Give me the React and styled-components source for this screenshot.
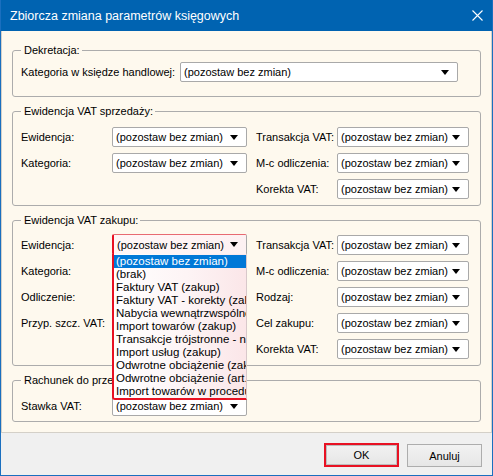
import React from 'react'
import styled, { createGlobalStyle } from 'styled-components'

const GlobalStyle = createGlobalStyle`
  html, body { margin: 0; padding: 0; }
  body { background: #ffffff; }
  * { box-sizing: border-box; }
`

const FONT = `"Liberation Sans", Arial, sans-serif`

const Window = styled.div`
  width: 493px;
  height: 476px;
  display: flex;
  flex-direction: column;
  border: 1px solid #1a6fbf;
  border-top: none;
  font-family: ${FONT};
  font-size: 11px;
  color: #000;
`

const TitleBar = styled.div`
  height: 31px;
  flex: none;
  display: flex;
  align-items: center;
  justify-content: space-between;
  padding: 0 9px 0 9px;
  background: #0063b1;
  color: #fff;
  font-size: 12.5px;
`

const Client = styled.div`
  flex: 1;
  display: flex;
  flex-direction: column;
  gap: 7px;
  padding: 12px 10px 6px 10px;
  background: #fef9ee;
  border: 1px solid #d4d0c8;
  border-top: none;
`

const Group = styled.fieldset`
  margin: 0;
  min-width: 0;
  border: 1px solid #acacac;
  border-radius: 3px;
  padding: ${p => p.$pt || 8}px 10px ${p => p.$pb || 6}px 8px;
`

const Legend = styled.legend`
  padding: 0 2px 0 3px;
  line-height: 14px;
  font-size: 11px;
`

const Columns = styled.div`
  display: flex;
  gap: 9px;
`

const Pane = styled.div`
  display: grid;
  grid-template-columns: ${p => p.$label}px ${p => p.$field}px;
  grid-auto-rows: 20px;
  row-gap: 6px;
  align-items: center;
`

const Label = styled.span`
  white-space: nowrap;
  font-size: 11px;
`

const SelectBox = styled.div`
  position: relative;
  height: ${p => (p.$focus ? 21 : 20)}px;
  margin-top: ${p => (p.$focus ? -1 : 0)}px;
  display: flex;
  align-items: center;
  justify-content: space-between;
  padding: 0 8px 0 3px;
  background: ${p => (p.$focus ? 'linear-gradient(to right, #fff7f7, #fdf1f2)' : '#fff')};
  border: 1px solid #a9a9a9;
  border-left: ${p => (p.$focus ? '2px solid #e81123' : '1px solid #a9a9a9')};
  border-top-color: ${p => (p.$focus ? '#e86a72' : '#a9a9a9')};
  border-radius: 2px;
  font-size: 11px;
  white-space: nowrap;
`

const Value = styled.span`
  visibility: ${p => (p.$covered ? 'hidden' : 'visible')};
`

const Arrow = styled.span`
  width: 0;
  height: 0;
  border-left: 4.5px solid transparent;
  border-right: 4.5px solid transparent;
  border-top: 5px solid #000;
`

const List = styled.div`
  position: absolute;
  top: 100%;
  left: -2px;
  width: 135px;
  height: 146px;
  z-index: 10;
  overflow: hidden;
  padding-top: 1px;
  background: linear-gradient(to right, #ffffff 0%, #fdf4f5 55%, #fbe6e8 100%);
  border-left: 2px solid #e81123;
  border-bottom: 2px solid #e81123;
  border-right: 1px solid #d8c8ca;
  border-bottom-left-radius: 3px;
  font-size: 11.5px;
`

const Notch = styled.span`
  position: absolute;
  left: -5px;
  top: 60px;
  width: 0;
  height: 0;
  border-top: 3px solid transparent;
  border-bottom: 3px solid transparent;
  border-right: 3px solid #e81123;
`

const Item = styled.div`
  height: 13px;
  line-height: 13px;
  padding-left: 2px;
  white-space: nowrap;
  overflow: hidden;
  background: ${p => (p.$active ? '#0078d7' : 'transparent')};
  color: ${p => (p.$active ? '#fff' : '#000')};
`

const Footer = styled.div`
  height: 42px;
  flex: none;
  display: flex;
  justify-content: flex-end;
  align-items: flex-start;
  gap: 8px;
  padding: 10px 10px 0 0;
  background: #f0f0f0;
`

const Button = styled.button`
  width: 75px;
  height: ${p => (p.$primary ? 24 : 23)}px;
  margin-top: ${p => (p.$primary ? 0 : 1)}px;
  font-family: ${FONT};
  font-size: 11px;
  color: #000;
  background: linear-gradient(#f2f2f2, #e6e6e6);
  border: ${p => (p.$primary ? '2px solid #e81123' : '1px solid #adadad')};
  box-shadow: ${p => (p.$primary ? 'inset 0 0 0 1px #bdbdbd' : 'none')};
  border-radius: 0;
  padding: 0;
`

const KEEP = '(pozostaw bez zmian)'

const options = [
  '(pozostaw bez zmian)',
  '(brak)',
  'Faktury VAT (zakup)',
  'Faktury VAT - korekty (zakup)',
  'Nabycia wewnątrzwspólnotowe',
  'Import towarów (zakup)',
  'Transakcje trójstronne - nabycie',
  'Import usług (zakup)',
  'Odwrotne obciążenie (zakup)',
  'Odwrotne obciążenie (art. 17)',
  'Import towarów w procedurze',
]

function Select({ focus, open, covered }) {
  return (
    <SelectBox $focus={focus}>
      <Value $covered={covered}>{KEEP}</Value>
      <Arrow />
      {open && (
        <List>
          <Notch />
          {options.map((o, i) => (
            <Item key={o} $active={i === 0}>{o}</Item>
          ))}
        </List>
      )}
    </SelectBox>
  )
}

function Fields({ label, field, rows }) {
  return (
    <Pane $label={label} $field={field}>
      {rows.map((r) => (
        <React.Fragment key={r.name}>
          <Label>{r.name}</Label>
          <Select focus={r.open} open={r.open} covered={r.covered} />
        </React.Fragment>
      ))}
    </Pane>
  )
}

function CloseIcon() {
  return (
    <svg width="11" height="11" viewBox="0 0 11 11">
      <path d="M0.5 0.5 L10.5 10.5 M10.5 0.5 L0.5 10.5" stroke="#fff" strokeWidth="1.1" />
    </svg>
  )
}

export default function App() {
  return (
    <>
      <GlobalStyle />
      <Window>
        <TitleBar>
          <span>Zbiorcza zmiana parametrów księgowych</span>
          <CloseIcon />
        </TitleBar>
        <Client>
          <Group $pt={5} $pb={14}>
            <Legend>Dekretacja:</Legend>
            <Fields label={159} field={278} rows={[{ name: 'Kategoria w księdze handlowej:' }]} />
          </Group>

          <Group $pt={9} $pb={6}>
            <Legend>Ewidencja VAT sprzedaży:</Legend>
            <Columns>
              <Fields label={91} field={135} rows={[{ name: 'Ewidencja:' }, { name: 'Kategoria:' }]} />
              <Fields
                label={81}
                field={132}
                rows={[{ name: 'Transakcja VAT:' }, { name: 'M-c odliczenia:' }, { name: 'Korekta VAT:' }]}
              />
            </Columns>
          </Group>

          <Group $pt={8} $pb={6}>
            <Legend>Ewidencja VAT zakupu:</Legend>
            <Columns>
              <Fields
                label={91}
                field={135}
                rows={[
                  { name: 'Ewidencja:', open: true },
                  { name: 'Kategoria:', covered: true },
                  { name: 'Odliczenie:', covered: true },
                  { name: 'Przyp. szcz. VAT:', covered: true },
                ]}
              />
              <Fields
                label={81}
                field={132}
                rows={[
                  { name: 'Transakcja VAT:' },
                  { name: 'M-c odliczenia:' },
                  { name: 'Rodzaj:' },
                  { name: 'Cel zakupu:' },
                  { name: 'Korekta VAT:' },
                ]}
              />
            </Columns>
          </Group>

          <Group $pt={9} $pb={5}>
            <Legend>Rachunek do przeksięgowania:</Legend>
            <Fields label={91} field={135} rows={[{ name: 'Stawka VAT:' }]} />
          </Group>
        </Client>
        <Footer>
          <Button $primary>OK</Button>
          <Button>Anuluj</Button>
        </Footer>
      </Window>
    </>
  )
}
